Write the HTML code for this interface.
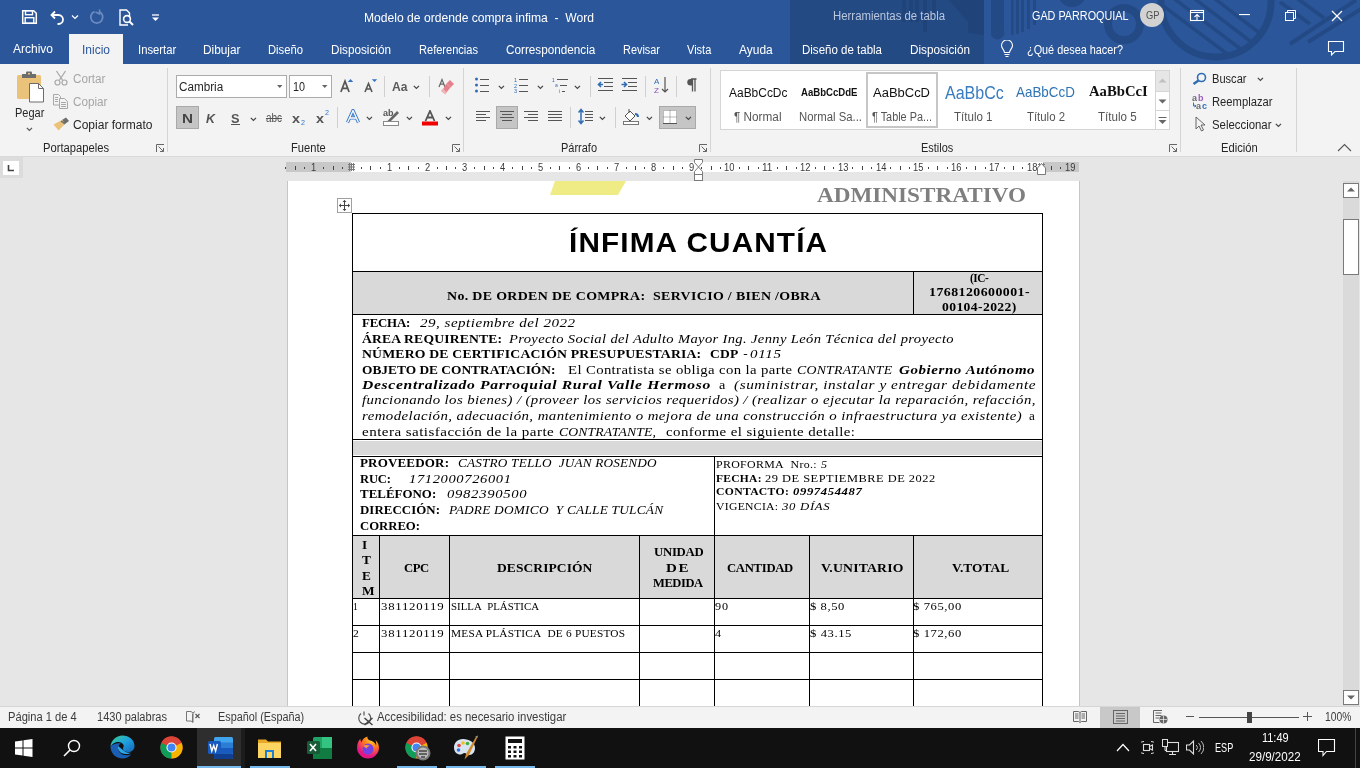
<!DOCTYPE html>
<html><head><meta charset="utf-8">
<style>
*{margin:0;padding:0;box-sizing:border-box}
html,body{width:1360px;height:768px;overflow:hidden;background:#e6e6e6;font-family:"Liberation Sans",sans-serif}
.a{position:absolute;white-space:nowrap}
#title{position:absolute;left:0;top:0;width:1360px;height:64px;background:#2b579a;overflow:hidden}
#ribbon{position:absolute;left:0;top:64px;width:1360px;height:93px;background:#f3f3f3}
#doc{position:absolute;left:0;top:157px;width:1360px;height:549px;background:#e6e6e6;overflow:hidden}
#status{position:absolute;left:0;top:706px;width:1360px;height:22px;background:#f3f3f3}
#task{position:absolute;left:0;top:728px;width:1360px;height:40px;background:#101010}
</style></head><body>
<div id="root" style="position:absolute;left:0;top:0;width:1360px;height:768px;overflow:hidden;will-change:transform">
<div id="title">
<svg class="a" style="left:0;top:0" width="1360" height="64">
<rect x="790" y="0" width="194" height="64" fill="#244a84"/>
<g fill="#20447a">
<rect x="902" y="0" width="4" height="22"/><rect x="909" y="0" width="4" height="22"/><rect x="915" y="0" width="4" height="22"/><rect x="923" y="0" width="4" height="32"/><rect x="932" y="0" width="4" height="20"/>
<path d="M949 0 L968 0 L968 22 Z"/>
<path d="M968 0 L984 0 L984 35 L968 33 Z"/>
</g>
<g fill="#244a86">
<path d="M991 0h13v30a6 6 0 0 1-13 5z"/>
<rect x="1011" y="0" width="2.5" height="35"/><rect x="1016" y="0" width="3" height="34"/><rect x="1021" y="0" width="3" height="32"/><rect x="1027" y="0" width="3" height="29"/><rect x="1033" y="0" width="3" height="25"/>
<circle cx="1072" cy="-7" r="14"/>
</g>
<clipPath id="cp1"><circle cx="1216" cy="2" r="52"/></clipPath>
<g clip-path="url(#cp1)" stroke="#244a86" stroke-width="3.5"><path d="M1150 -4 L1230 56"/><path d="M1160 -12 L1242 50"/><path d="M1170 -20 L1254 44"/><path d="M1180 -28 L1266 38"/></g>
<circle cx="1216" cy="2" r="55" fill="none" stroke="#244a86" stroke-width="7"/>
<circle cx="1124" cy="24" r="16" fill="none" stroke="#244a86" stroke-width="8"/>
<g stroke="#244a86" stroke-width="4"><path d="M1356 0 L1290 44"/><path d="M1366 6 L1308 42"/><path d="M1280 2 L1310 24"/><path d="M1294 -4 L1324 18"/></g>
</svg>
<svg class="a" style="left:21px;top:9px" width="17" height="16" viewBox="0 0 17 16"><path d="M1.7 1.7h11l2.6 2.6v10h-13.6z" fill="none" stroke="#fff" stroke-width="1.5"/><rect x="4.5" y="1.7" width="7" height="4" fill="none" stroke="#fff" stroke-width="1.4"/><rect x="4.2" y="8.7" width="8.6" height="5.6" fill="none" stroke="#fff" stroke-width="1.4"/></svg>
<svg class="a" style="left:50px;top:9px" width="16" height="16" viewBox="0 0 16 16"><path d="M5 2.5 L1.5 6 L5 9.5" fill="none" stroke="#fff" stroke-width="1.8"/><path d="M2 6h6.5a4.5 4.5 0 0 1 0 9h-1" fill="none" stroke="#fff" stroke-width="1.8"/></svg>
<svg class="a" style="left:71px;top:14px" width="8" height="6"><path d="M1 1.5l3 3 3-3" fill="none" stroke="#fff" stroke-width="1.2"/></svg>
<svg class="a" style="left:89px;top:9px" width="16" height="16" viewBox="0 0 16 16"><path d="M10 2.6 A6 6 0 1 1 5.5 2.6" fill="none" stroke="#6d8ac0" stroke-width="1.8"/><path d="M10.5 0.5 L10.5 5 L6.5 3" fill="none" stroke="#6d8ac0" stroke-width="1.5"/></svg>
<svg class="a" style="left:119px;top:9px" width="17" height="17" viewBox="0 0 17 17"><path d="M9 16H1V1h6.5l3 3v4" fill="none" stroke="#fff" stroke-width="1.4"/><circle cx="8" cy="10" r="3.4" fill="none" stroke="#fff" stroke-width="1.6"/><path d="M10.5 12.5 L14 16" stroke="#fff" stroke-width="2"/></svg>
<svg class="a" style="left:151px;top:14px" width="9" height="8"><path d="M1 1h7" stroke="#fff" stroke-width="1.3"/><path d="M1 3.5h7l-3.5 3.5z" fill="#fff"/></svg>
<div class="a" style="left:363.5px;top:11.84px;font-size:12px;line-height:12px;color:#ffffff;font-family:'Liberation Sans',sans-serif;transform:scaleX(1.0093);transform-origin:0 0;">Modelo de ordende compra infima&nbsp; - &nbsp;Word</div><div class="a" style="left:832.5px;top:10.14px;font-size:12px;line-height:12px;color:#bac7dd;font-family:'Liberation Sans',sans-serif;transform:scaleX(0.9487);transform-origin:0 0;">Herramientas de tabla</div><div class="a" style="left:1031.5px;top:10.34px;font-size:12px;line-height:12px;color:#ffffff;font-family:'Liberation Sans',sans-serif;transform:scaleX(0.9007);transform-origin:0 0;">GAD PARROQUIAL</div><div class="a" style="left:1140px;top:3px;width:24px;height:24px;border-radius:12px;background:#d2d2d2"></div><div class="a" style="left:1145.5px;top:10.84px;font-size:10px;line-height:10px;color:#505050;font-family:'Liberation Sans',sans-serif;transform:scaleX(0.9341);transform-origin:0 0;">GP</div><svg class="a" style="left:1189px;top:8px" width="16" height="14" viewBox="0 0 16 14"><rect x="1.5" y="2.5" width="13" height="10" fill="none" stroke="#fff" stroke-width="1.1"/><path d="M1.5 4.5h13" stroke="#fff" stroke-width="1.1"/><path d="M8 12V6.5M5.5 9L8 6.5l2.5 2.5" fill="none" stroke="#fff" stroke-width="1.1"/></svg>
<svg class="a" style="left:1239px;top:14px" width="12" height="2"><rect x="0" y="0" width="11" height="1.1" fill="#fff"/></svg>
<svg class="a" style="left:1285px;top:9px" width="12" height="12" viewBox="0 0 12 12"><rect x="0.5" y="3.5" width="8" height="8" fill="none" stroke="#fff" stroke-width="1"/><path d="M2.5 3.5V1.5h8v8H8.5" fill="none" stroke="#fff" stroke-width="1"/></svg>
<svg class="a" style="left:1331px;top:10px" width="12" height="12" viewBox="0 0 12 12"><path d="M1 1l10 10M11 1L1 11" stroke="#fff" stroke-width="1.2"/></svg>
<div class="a" style="left:69px;top:34px;width:54px;height:30px;background:#f3f3f3"></div>
<div class="a" style="left:13px;top:43.34px;font-size:12px;line-height:12px;color:#ffffff;font-family:'Liberation Sans',sans-serif;transform:scaleX(0.9996);transform-origin:0 0;">Archivo</div><div class="a" style="left:81.6px;top:44.14px;font-size:12px;line-height:12px;color:#2b579a;font-family:'Liberation Sans',sans-serif;transform:scaleX(0.9994);transform-origin:0 0;">Inicio</div><div class="a" style="left:137.5px;top:44.14px;font-size:12px;line-height:12px;color:#ffffff;font-family:'Liberation Sans',sans-serif;transform:scaleX(0.9389);transform-origin:0 0;">Insertar</div><div class="a" style="left:203.2px;top:44.14px;font-size:12px;line-height:12px;color:#ffffff;font-family:'Liberation Sans',sans-serif;transform:scaleX(0.9864);transform-origin:0 0;">Dibujar</div><div class="a" style="left:268.3px;top:44.14px;font-size:12px;line-height:12px;color:#ffffff;font-family:'Liberation Sans',sans-serif;transform:scaleX(0.9368);transform-origin:0 0;">Diseño</div><div class="a" style="left:331px;top:44.14px;font-size:12px;line-height:12px;color:#ffffff;font-family:'Liberation Sans',sans-serif;transform:scaleX(0.9778);transform-origin:0 0;">Disposición</div><div class="a" style="left:419px;top:44.14px;font-size:12px;line-height:12px;color:#ffffff;font-family:'Liberation Sans',sans-serif;transform:scaleX(0.9214);transform-origin:0 0;">Referencias</div><div class="a" style="left:506.2px;top:44.14px;font-size:12px;line-height:12px;color:#ffffff;font-family:'Liberation Sans',sans-serif;transform:scaleX(0.9771);transform-origin:0 0;">Correspondencia</div><div class="a" style="left:623px;top:44.14px;font-size:12px;line-height:12px;color:#ffffff;font-family:'Liberation Sans',sans-serif;transform:scaleX(0.9094);transform-origin:0 0;">Revisar</div><div class="a" style="left:687px;top:44.14px;font-size:12px;line-height:12px;color:#ffffff;font-family:'Liberation Sans',sans-serif;transform:scaleX(0.9181);transform-origin:0 0;">Vista</div><div class="a" style="left:738.7px;top:44.14px;font-size:12px;line-height:12px;color:#ffffff;font-family:'Liberation Sans',sans-serif;transform:scaleX(0.9967);transform-origin:0 0;">Ayuda</div><div class="a" style="left:802px;top:44.14px;font-size:12px;line-height:12px;color:#ffffff;font-family:'Liberation Sans',sans-serif;transform:scaleX(0.9593);transform-origin:0 0;">Diseño de tabla</div><div class="a" style="left:910px;top:44.14px;font-size:12px;line-height:12px;color:#ffffff;font-family:'Liberation Sans',sans-serif;transform:scaleX(0.9778);transform-origin:0 0;">Disposición</div><div class="a" style="left:1027px;top:44.14px;font-size:12px;line-height:12px;color:#ffffff;font-family:'Liberation Sans',sans-serif;transform:scaleX(0.9050);transform-origin:0 0;">¿Qué desea hacer?</div><svg class="a" style="left:1000px;top:40px" width="14" height="18" viewBox="0 0 14 18"><path d="M4.5 12.5C4.5 10 1.5 8.5 1.5 5.5A5.5 5.5 0 0 1 12.5 5.5C12.5 8.5 9.5 10 9.5 12.5Z" fill="none" stroke="#fff" stroke-width="1.1"/><path d="M4.5 14.5h5M5.5 16.5h3" stroke="#fff" stroke-width="1.1"/></svg>
<svg class="a" style="left:1327px;top:40px" width="18" height="17" viewBox="0 0 18 17"><path d="M1.5 1.5h15v10H8l-3.5 3.5V11.5H1.5z" fill="none" stroke="#fff" stroke-width="1.1"/></svg>
</div><div id="ribbon"></div><div class="a" style="left:0;top:156px;width:1360px;height:1px;background:#dadada"></div><svg class="a" style="left:16px;top:71px" width="30" height="32" viewBox="0 0 30 32">
<rect x="1" y="4" width="24" height="24" rx="1.5" fill="#ebc27a"/>
<rect x="6" y="3" width="14" height="4" fill="#6d6d6d"/><rect x="10" y="0.5" width="6" height="4" rx="1" fill="#6d6d6d"/><rect x="12" y="2" width="2" height="1.5" fill="#ebc27a"/>
<path d="M13.5 12.5h9l5 5v13.5h-14z" fill="#fff" stroke="#6d6d6d" stroke-width="1"/><path d="M22.5 12.5v5h5" fill="none" stroke="#6d6d6d" stroke-width="1"/>
</svg><div class="a" style="left:14.6px;top:107.04px;font-size:12px;line-height:12px;color:#262626;font-family:'Liberation Sans',sans-serif;transform:scaleX(0.9179);transform-origin:0 0;">Pegar</div><svg class="a" style="left:26px;top:127px" width="7" height="5"><path d="M0.8 0.8l2.6 2.6 2.6-2.6" fill="none" stroke="#555" stroke-width="1.2"/></svg><svg class="a" style="left:53px;top:70px" width="16" height="16" viewBox="0 0 16 16"><path d="M3.5 1L9.5 10M12.5 1L6.5 10" stroke="#a8a8a8" stroke-width="1.3" fill="none"/><circle cx="4.5" cy="12.5" r="2.5" fill="none" stroke="#a8a8a8" stroke-width="1.2"/><circle cx="11.5" cy="12.5" r="2.5" fill="none" stroke="#a8a8a8" stroke-width="1.2"/></svg><div class="a" style="left:72.5px;top:73.04px;font-size:12px;line-height:12px;color:#a6a6a6;font-family:'Liberation Sans',sans-serif;transform:scaleX(0.9747);transform-origin:0 0;">Cortar</div><svg class="a" style="left:53px;top:94px" width="16" height="15" viewBox="0 0 16 15"><path d="M0.5 0.5h5l2 2v8.5h-7z" fill="#f3f3f3" stroke="#a8a8a8" stroke-width="1"/><path d="M6.5 4.5h5l3 3v7h-8z" fill="#f3f3f3" stroke="#a8a8a8" stroke-width="1"/><path d="M2 3.5h3M2 5.5h3M2 7.5h3M8 8.5h5M8 10.5h5M8 12.5h5" stroke="#a8a8a8" stroke-width="1"/></svg><div class="a" style="left:72.5px;top:96.04px;font-size:12px;line-height:12px;color:#a6a6a6;font-family:'Liberation Sans',sans-serif;transform:scaleX(0.9757);transform-origin:0 0;">Copiar</div><svg class="a" style="left:53px;top:117px" width="17" height="14" viewBox="0 0 17 14"><path d="M9 3 L13 0.5 L16 4 L12 7 Z" fill="#6d6d6d"/><path d="M0.5 7.5 L9 3 L12 7 L5.5 13.5 Z" fill="#ebc27a"/><path d="M8 4 L12 7" stroke="#6d6d6d" stroke-width="1.5"/></svg><div class="a" style="left:72.5px;top:119.04px;font-size:12px;line-height:12px;color:#262626;font-family:'Liberation Sans',sans-serif;transform:scaleX(1.0016);transform-origin:0 0;">Copiar formato</div><div class="a" style="left:42.6px;top:142.04px;font-size:12px;line-height:12px;color:#262626;font-family:'Liberation Sans',sans-serif;transform:scaleX(0.9333);transform-origin:0 0;">Portapapeles</div><svg class="a" style="left:156px;top:144px" width="9" height="9"><path d="M0.5 8V0.5H8" fill="none" stroke="#666" stroke-width="1"/><path d="M2.5 2.5L7.5 7.5M4 7.5h3.5V4" fill="none" stroke="#666" stroke-width="1"/></svg><div class="a" style="left:167px;top:68px;width:1px;height:84px;background:#d4d4d4"></div><div class="a" style="left:176px;top:75px;width:111px;height:23px;background:#fff;border:1px solid #ababab"></div><div class="a" style="left:179.3px;top:81.04px;font-size:12px;line-height:12px;color:#262626;font-family:'Liberation Sans',sans-serif;transform:scaleX(0.9744);transform-origin:0 0;">Cambria</div><svg class="a" style="left:277px;top:85px" width="6" height="4"><path d="M0 0h5.5L2.75 3z" fill="#666"/></svg><div class="a" style="left:289px;top:75px;width:43px;height:23px;background:#fff;border:1px solid #ababab"></div><div class="a" style="left:292.5px;top:81.04px;font-size:12px;line-height:12px;color:#262626;font-family:'Liberation Sans',sans-serif;transform:scaleX(0.8982);transform-origin:0 0;">10</div><svg class="a" style="left:322px;top:85px" width="6" height="4"><path d="M0 0h5.5L2.75 3z" fill="#666"/></svg><svg class="a" style="left:340px;top:78px" width="15" height="15" viewBox="0 0 15 15"><path d="M0.9 14L5 3.2 9.1 14M2.4 10.3h5.2" fill="none" stroke="#555" stroke-width="1.7"/><path d="M7.8 4L10.5 1 13.2 4z" fill="#2f72c0"/></svg>
<svg class="a" style="left:364px;top:78px" width="14" height="15" viewBox="0 0 14 15"><path d="M1 14L4.5 5.5 8 14M2.3 11h4.4" fill="none" stroke="#555" stroke-width="1.6"/><path d="M7.8 1.2h5.4L10.5 4z" fill="#2f72c0"/></svg><div class="a" style="left:384px;top:76px;width:1px;height:21px;background:#d0d0d0"></div><div class="a" style="left:391.8px;top:79.80px;font-size:13px;line-height:13px;color:#5a5a5a;font-family:'Liberation Sans',sans-serif;transform:scaleX(0.9323);transform-origin:0 0;"><b>Aa</b></div><svg class="a" style="left:413px;top:85px" width="7" height="5"><path d="M0.8 0.8l2.6 2.6 2.6-2.6" fill="none" stroke="#444" stroke-width="1.2"/></svg><div class="a" style="left:429px;top:76px;width:1px;height:21px;background:#d0d0d0"></div><svg class="a" style="left:438px;top:78px" width="17" height="17" viewBox="0 0 17 17"><path d="M1 9L4 1.5 7 9M2.1 6.2h3.8" fill="none" stroke="#666" stroke-width="1.2"/><path d="M8.5 5.5L12 2l4 4-3.5 3.5z" fill="#e5808c"/><path d="M3.5 13.5L8.5 5.5l4 4-5 6z" fill="#e5808c"/><path d="M3 12.5l2-2 4 4-2 2z" fill="#f0b3ba"/></svg><div class="a" style="left:176px;top:106px;width:23px;height:23px;background:#c5c5c5;border:1px solid #a9a9a9"></div><div class="a" style="left:182px;top:111.50px;font-size:13px;line-height:13px;color:#444;font-family:'Liberation Sans',sans-serif;transform:scaleX(1.1714);transform-origin:0 0;"><b>N</b></div><div class="a" style="left:206px;top:111.50px;font-size:13px;line-height:13px;color:#555;font-family:'Liberation Sans',sans-serif;transform:scaleX(0.9584);transform-origin:0 0;"><b><i>K</i></b></div><div class="a" style="left:231px;top:111.50px;font-size:13px;line-height:13px;color:#555;font-family:'Liberation Sans',sans-serif;transform:scaleX(0.9802);transform-origin:0 0;"><b>S</b></div><div class="a" style="left:231px;top:124px;width:9px;height:1px;background:#555"></div><svg class="a" style="left:250px;top:117px" width="7" height="5"><path d="M0.8 0.8l2.6 2.6 2.6-2.6" fill="none" stroke="#444" stroke-width="1.2"/></svg><div class="a" style="left:266px;top:111.84px;font-size:12px;line-height:12px;color:#555;font-family:'Liberation Sans',sans-serif;transform:scaleX(0.8265);transform-origin:0 0;text-decoration:line-through;">abc</div><div class="a" style="left:292px;top:111.50px;font-size:13px;line-height:13px;color:#555;font-family:'Liberation Sans',sans-serif;transform:scaleX(1.1058);transform-origin:0 0;"><b>x</b></div><div class="a" style="left:300.5px;top:119.07px;font-size:7px;line-height:7px;color:#2b79d0;font-family:'Liberation Sans',sans-serif;transform:scaleX(1.0240);transform-origin:0 0;">2</div><div class="a" style="left:316px;top:111.50px;font-size:13px;line-height:13px;color:#555;font-family:'Liberation Sans',sans-serif;transform:scaleX(1.1058);transform-origin:0 0;"><b>x</b></div><div class="a" style="left:324.5px;top:108.57px;font-size:7px;line-height:7px;color:#2b79d0;font-family:'Liberation Sans',sans-serif;transform:scaleX(1.0240);transform-origin:0 0;">2</div><div class="a" style="left:337px;top:107px;width:1px;height:21px;background:#d0d0d0"></div><svg class="a" style="left:346px;top:109px" width="14" height="15" viewBox="0 0 14 15"><path d="M1.5 13.5L7 1.5 12.5 13.5M3.8 9h6.4" fill="none" stroke="#3c7dc9" stroke-width="3.2" stroke-linejoin="round"/><path d="M1.5 13.5L7 1.5 12.5 13.5M3.8 9h6.4" fill="none" stroke="#fff" stroke-width="1.3" stroke-linejoin="round"/><path d="M6 7.5h2L7 5.2z" fill="#3c7dc9"/></svg><svg class="a" style="left:366px;top:116px" width="7" height="5"><path d="M0.8 0.8l2.6 2.6 2.6-2.6" fill="none" stroke="#444" stroke-width="1.2"/></svg><svg class="a" style="left:383px;top:108px" width="17" height="18" viewBox="0 0 17 18"><text x="0" y="8" font-size="9" font-weight="bold" style="font-family:'Liberation Sans'" fill="#555">ab</text><path d="M4 13.5 L14 3 L16 5 L6.5 14.5 L3.5 15z" fill="#666"/><rect x="0.5" y="13.5" width="15" height="4" fill="#fff" stroke="#8a8a8a" stroke-width="1"/></svg><svg class="a" style="left:406px;top:116px" width="7" height="5"><path d="M0.8 0.8l2.6 2.6 2.6-2.6" fill="none" stroke="#444" stroke-width="1.2"/></svg><svg class="a" style="left:421px;top:110px" width="18" height="16" viewBox="0 0 18 16"><path d="M4.5 11L9 1 13.5 11M6.2 7.5h5.6" fill="none" stroke="#555" stroke-width="1.8"/><rect x="1" y="11.5" width="16" height="4" fill="#f00000"/></svg><svg class="a" style="left:445px;top:116px" width="7" height="5"><path d="M0.8 0.8l2.6 2.6 2.6-2.6" fill="none" stroke="#444" stroke-width="1.2"/></svg><div class="a" style="left:290.7px;top:142.04px;font-size:12px;line-height:12px;color:#262626;font-family:'Liberation Sans',sans-serif;transform:scaleX(0.9288);transform-origin:0 0;">Fuente</div><svg class="a" style="left:452px;top:144px" width="9" height="9"><path d="M0.5 8V0.5H8" fill="none" stroke="#666" stroke-width="1"/><path d="M2.5 2.5L7.5 7.5M4 7.5h3.5V4" fill="none" stroke="#666" stroke-width="1"/></svg><div class="a" style="left:463px;top:68px;width:1px;height:84px;background:#d4d4d4"></div><svg class="a" style="left:475px;top:77px" width="15" height="16" viewBox="0 0 15 16"><circle cx="1.5" cy="2" r="1.5" fill="#2f6db5"/><circle cx="1.5" cy="8" r="1.5" fill="#2f6db5"/><circle cx="1.5" cy="14" r="1.5" fill="#2f6db5"/><path d="M5 2.5h9M5 8.5h9M5 14.5h9" stroke="#555" stroke-width="1"/></svg><svg class="a" style="left:498px;top:85px" width="7" height="5"><path d="M0.8 0.8l2.6 2.6 2.6-2.6" fill="none" stroke="#444" stroke-width="1.2"/></svg><svg class="a" style="left:514px;top:77px" width="15" height="16" viewBox="0 0 15 16"><text x="0" y="4.5" font-size="5.5" style="font-family:'Liberation Sans'" fill="#2f6db5">1</text><text x="0" y="10.5" font-size="5.5" style="font-family:'Liberation Sans'" fill="#2f6db5">2</text><text x="0" y="16" font-size="5.5" style="font-family:'Liberation Sans'" fill="#2f6db5">3</text><path d="M5 2.5h9M5 8.5h9M5 14.5h9" stroke="#555" stroke-width="1"/></svg><svg class="a" style="left:537px;top:85px" width="7" height="5"><path d="M0.8 0.8l2.6 2.6 2.6-2.6" fill="none" stroke="#444" stroke-width="1.2"/></svg><svg class="a" style="left:552px;top:77px" width="17" height="16" viewBox="0 0 17 16"><text x="0" y="4.5" font-size="5" style="font-family:'Liberation Sans'" fill="#2f6db5">1</text><text x="3" y="10" font-size="5" style="font-family:'Liberation Sans'" fill="#2f6db5">a</text><text x="7" y="15.5" font-size="5" style="font-family:'Liberation Sans'" fill="#2f6db5">i</text><path d="M5 2.5h11M8 8.5h7M10 14.5h3" stroke="#555" stroke-width="1"/></svg><svg class="a" style="left:574px;top:85px" width="7" height="5"><path d="M0.8 0.8l2.6 2.6 2.6-2.6" fill="none" stroke="#444" stroke-width="1.2"/></svg><div class="a" style="left:590px;top:76px;width:1px;height:21px;background:#d0d0d0"></div><svg class="a" style="left:597px;top:77px" width="17" height="16" viewBox="0 0 17 16"><path d="M1 1.5h15M7 5.5h9M7 9.5h9M1 13.5h15" stroke="#555" stroke-width="1"/><path d="M6 7.5H1.5M4 5L1.5 7.5 4 10" fill="none" stroke="#2f6db5" stroke-width="1.6"/></svg>
<svg class="a" style="left:621px;top:77px" width="17" height="16" viewBox="0 0 17 16"><path d="M1 1.5h15M7 5.5h9M7 9.5h9M1 13.5h15" stroke="#555" stroke-width="1"/><path d="M0.5 7.5H5M3 5L5.5 7.5 3 10" fill="none" stroke="#2f6db5" stroke-width="1.6"/></svg><div class="a" style="left:645px;top:76px;width:1px;height:21px;background:#d0d0d0"></div><svg class="a" style="left:654px;top:76px" width="15" height="18" viewBox="0 0 15 18"><text x="0" y="7.5" font-size="8" style="font-family:'Liberation Sans'" fill="#2f6db5">A</text><text x="0" y="16.5" font-size="8" style="font-family:'Liberation Sans'" fill="#8a4fb5">Z</text><path d="M11 1v15M8 13l3 3 3-3" fill="none" stroke="#555" stroke-width="1.2"/></svg>
<svg class="a" style="left:686px;top:78px" width="11" height="14" viewBox="0 0 11 14"><path d="M5 1h5.5M6.5 1v12.5M9 1v12.5" stroke="#555" stroke-width="1.3"/><path d="M6.5 1H4.5a3.2 3.2 0 0 0 0 6.4h2z" fill="#555"/></svg><div class="a" style="left:676px;top:76px;width:1px;height:21px;background:#d0d0d0"></div><svg class="a" style="left:476px;top:111px" width="15" height="11"><path d="M0 0.5h14M0 3.5h10M0 6.5h14M0 9.5h10" stroke="#555" stroke-width="1"/></svg><div class="a" style="left:496px;top:106px;width:22px;height:23px;background:#c5c5c5;border:1px solid #a9a9a9"></div><svg class="a" style="left:500px;top:111px" width="15" height="11"><path d="M0 0.5h14M2 3.5h10M0 6.5h14M2 9.5h10" stroke="#555" stroke-width="1"/></svg>
<svg class="a" style="left:524px;top:111px" width="15" height="11"><path d="M0 0.5h14M4 3.5h10M0 6.5h14M4 9.5h10" stroke="#555" stroke-width="1"/></svg>
<svg class="a" style="left:548px;top:111px" width="15" height="11"><path d="M0 0.5h14M0 3.5h14M0 6.5h14M0 9.5h14" stroke="#555" stroke-width="1"/></svg><div class="a" style="left:570px;top:107px;width:1px;height:21px;background:#d0d0d0"></div><svg class="a" style="left:578px;top:108px" width="16" height="17" viewBox="0 0 16 17"><path d="M3 2v13M0.5 4.5L3 1.5l2.5 3M0.5 12.5L3 15.5l2.5-3" fill="none" stroke="#2f6db5" stroke-width="1.5"/><path d="M7 3.5h8M7 6.5h8M7 9.5h8M7 12.5h8" stroke="#555" stroke-width="1"/></svg><svg class="a" style="left:599px;top:116px" width="7" height="5"><path d="M0.8 0.8l2.6 2.6 2.6-2.6" fill="none" stroke="#444" stroke-width="1.2"/></svg><div class="a" style="left:615px;top:107px;width:1px;height:21px;background:#d0d0d0"></div><svg class="a" style="left:623px;top:108px" width="17" height="17" viewBox="0 0 17 17"><path d="M2 8 L7 3 L12 8 L7 13 Z" fill="#fff" stroke="#555" stroke-width="1"/><path d="M6 1v4" stroke="#555" stroke-width="1"/><path d="M12 6a3 3 0 0 1 3 3" fill="none" stroke="#2f6db5" stroke-width="2"/><rect x="0.5" y="13.5" width="15" height="3" fill="#fff" stroke="#777" stroke-width="1"/></svg><svg class="a" style="left:646px;top:116px" width="7" height="5"><path d="M0.8 0.8l2.6 2.6 2.6-2.6" fill="none" stroke="#444" stroke-width="1.2"/></svg><div class="a" style="left:659px;top:106px;width:37px;height:23px;background:#c5c5c5;border:1px solid #a9a9a9"></div><svg class="a" style="left:663px;top:110px" width="14" height="14" viewBox="0 0 14 14"><rect x="0" y="0" width="14" height="14" fill="#fff"/><path d="M0.5 0.5h13v13h-13zM7 0.5v13M0.5 7h13" fill="none" stroke="#777" stroke-width="1" stroke-dasharray="1 1"/><path d="M0 13.5h14" stroke="#555" stroke-width="1"/></svg><svg class="a" style="left:685px;top:116px" width="7" height="5"><path d="M0.8 0.8l2.6 2.6 2.6-2.6" fill="none" stroke="#444" stroke-width="1.2"/></svg><div class="a" style="left:561.3px;top:142.04px;font-size:12px;line-height:12px;color:#262626;font-family:'Liberation Sans',sans-serif;transform:scaleX(0.9146);transform-origin:0 0;">Párrafo</div><svg class="a" style="left:699px;top:144px" width="9" height="9"><path d="M0.5 8V0.5H8" fill="none" stroke="#666" stroke-width="1"/><path d="M2.5 2.5L7.5 7.5M4 7.5h3.5V4" fill="none" stroke="#666" stroke-width="1"/></svg><div class="a" style="left:710px;top:68px;width:1px;height:84px;background:#d4d4d4"></div><div class="a" style="left:720px;top:70px;width:450px;height:60px;background:#fff;border:1px solid #d5d5d5"></div><div class="a" style="left:866px;top:72px;width:72px;height:56px;border:2px solid #c6c6c6;box-shadow:inset 0 0 0 1px #fff"></div><div class="a" style="left:728.5px;top:86.62px;font-size:12.5px;line-height:12.5px;color:#111;font-family:'Liberation Sans',sans-serif;transform:scaleX(0.9568);transform-origin:0 0;">AaBbCcDc</div><div class="a" style="left:734px;top:111.04px;font-size:12px;line-height:12px;color:#555;font-family:'Liberation Sans',sans-serif;transform:scaleX(0.9803);transform-origin:0 0;">¶ Normal</div><div class="a" style="left:800.5px;top:86.89px;font-size:11px;line-height:11px;color:#111;font-family:'Liberation Sans',sans-serif;transform:scaleX(0.8720);transform-origin:0 0;"><b>AaBbCcDdE</b></div><div class="a" style="left:798.5px;top:111.04px;font-size:12px;line-height:12px;color:#555;font-family:'Liberation Sans',sans-serif;transform:scaleX(0.9447);transform-origin:0 0;">Normal Sa...</div><div class="a" style="left:872.7px;top:86.62px;font-size:12.5px;line-height:12.5px;color:#111;font-family:'Liberation Sans',sans-serif;transform:scaleX(1.0384);transform-origin:0 0;">AaBbCcD</div><div class="a" style="left:871.5px;top:111.04px;font-size:12px;line-height:12px;color:#555;font-family:'Liberation Sans',sans-serif;transform:scaleX(0.9054);transform-origin:0 0;">¶ Table Pa...</div><div class="a" style="left:944.7px;top:83.56px;font-size:18px;line-height:18px;color:#3a7cc0;font-family:'Liberation Sans',sans-serif;transform:scaleX(0.8903);transform-origin:0 0;">AaBbCc</div><div class="a" style="left:954px;top:111.04px;font-size:12px;line-height:12px;color:#555;font-family:'Liberation Sans',sans-serif;transform:scaleX(0.9617);transform-origin:0 0;">Título 1</div><div class="a" style="left:1016.4px;top:84.30px;font-size:15px;line-height:15px;color:#2e74b5;font-family:'Liberation Sans',sans-serif;transform:scaleX(0.8928);transform-origin:0 0;">AaBbCcD</div><div class="a" style="left:1026.5px;top:111.04px;font-size:12px;line-height:12px;color:#555;font-family:'Liberation Sans',sans-serif;transform:scaleX(0.9493);transform-origin:0 0;">Título 2</div><div class="a" style="left:1089px;top:84.44px;font-size:15px;line-height:15px;color:#111;font-family:'Liberation Serif',serif;transform:scaleX(0.9797);transform-origin:0 0;"><b>AaBbCcI</b></div><div class="a" style="left:1098.2px;top:111.04px;font-size:12px;line-height:12px;color:#555;font-family:'Liberation Sans',sans-serif;transform:scaleX(0.9642);transform-origin:0 0;">Título 5</div><div class="a" style="left:1155px;top:70px;width:15px;height:60px;background:#fff;border:1px solid #d5d5d5"></div><div class="a" style="left:1156px;top:71px;width:13px;height:20px;background:#e6e6e6"></div><div class="a" style="left:1155px;top:91px;width:15px;height:1px;background:#d5d5d5"></div><div class="a" style="left:1155px;top:110px;width:15px;height:1px;background:#d5d5d5"></div><svg class="a" style="left:1158px;top:78px" width="9" height="5"><path d="M0.5 4.5L4.5 0.5 8.5 4.5z" fill="#c0c0c0"/></svg>
<svg class="a" style="left:1158px;top:99px" width="9" height="5"><path d="M0.5 0.5L4.5 4.5 8.5 0.5z" fill="#666"/></svg>
<svg class="a" style="left:1158px;top:117px" width="9" height="8"><path d="M0.5 0.5h8" stroke="#666" stroke-width="1"/><path d="M0.5 3L4.5 7 8.5 3z" fill="#666"/></svg><div class="a" style="left:921.4px;top:142.04px;font-size:12px;line-height:12px;color:#262626;font-family:'Liberation Sans',sans-serif;transform:scaleX(0.9111);transform-origin:0 0;">Estilos</div><svg class="a" style="left:1169px;top:144px" width="9" height="9"><path d="M0.5 8V0.5H8" fill="none" stroke="#666" stroke-width="1"/><path d="M2.5 2.5L7.5 7.5M4 7.5h3.5V4" fill="none" stroke="#666" stroke-width="1"/></svg><div class="a" style="left:1180px;top:68px;width:1px;height:84px;background:#d4d4d4"></div><svg class="a" style="left:1192px;top:72px" width="15" height="13" viewBox="0 0 15 13"><circle cx="9.5" cy="5.5" r="4" fill="none" stroke="#2f6db5" stroke-width="1.6"/><path d="M6.5 8.5L1.5 12" stroke="#2f6db5" stroke-width="2.4"/></svg><div class="a" style="left:1211.6px;top:73.04px;font-size:12px;line-height:12px;color:#262626;font-family:'Liberation Sans',sans-serif;transform:scaleX(0.9235);transform-origin:0 0;">Buscar</div><svg class="a" style="left:1257px;top:77px" width="7" height="5"><path d="M0.8 0.8l2.6 2.6 2.6-2.6" fill="none" stroke="#444" stroke-width="1.2"/></svg><svg class="a" style="left:1192px;top:94px" width="17" height="15" viewBox="0 0 17 15"><text x="0" y="6.5" font-size="9" font-weight="bold" style="font-family:'Liberation Sans'" fill="#6a6a6a">a</text><text x="6" y="6.5" font-size="9" font-weight="bold" style="font-family:'Liberation Sans'" fill="#9a5cc0">b</text><text x="4" y="14.5" font-size="9" font-weight="bold" style="font-family:'Liberation Sans'" fill="#6a6a6a">a</text><text x="10" y="14.5" font-size="9" font-weight="bold" style="font-family:'Liberation Sans'" fill="#2f72c0">c</text><path d="M1.5 8.5v3.5h2.5M2.5 11l1.5 1-1.5 1" fill="none" stroke="#2f72c0" stroke-width="1"/></svg><div class="a" style="left:1211.6px;top:96.04px;font-size:12px;line-height:12px;color:#262626;font-family:'Liberation Sans',sans-serif;transform:scaleX(0.9350);transform-origin:0 0;">Reemplazar</div><svg class="a" style="left:1195px;top:116px" width="11" height="16" viewBox="0 0 11 16"><path d="M1 1v12l3-3 2.5 5 2-1-2.5-5h4z" fill="#f3f3f3" stroke="#666" stroke-width="1"/></svg><div class="a" style="left:1211.6px;top:119.04px;font-size:12px;line-height:12px;color:#262626;font-family:'Liberation Sans',sans-serif;transform:scaleX(0.9489);transform-origin:0 0;">Seleccionar</div><svg class="a" style="left:1275px;top:123px" width="7" height="5"><path d="M0.8 0.8l2.6 2.6 2.6-2.6" fill="none" stroke="#444" stroke-width="1.2"/></svg><div class="a" style="left:1220.6px;top:142.04px;font-size:12px;line-height:12px;color:#262626;font-family:'Liberation Sans',sans-serif;transform:scaleX(0.9324);transform-origin:0 0;">Edición</div><div class="a" style="left:1296px;top:68px;width:1px;height:84px;background:#d4d4d4"></div><svg class="a" style="left:1337px;top:143px" width="15" height="9"><path d="M1 8L7.5 1.5 14 8" fill="none" stroke="#555" stroke-width="1.1"/></svg><div class="a" style="left:0;top:157px;width:23px;height:21px;background:#dcdcdc"></div><div class="a" style="left:3px;top:161px;width:16px;height:14px;background:#fff"></div><svg class="a" style="left:7px;top:164px" width="8" height="8"><path d="M1.5 1v5.5H7" fill="none" stroke="#444" stroke-width="1.6"/></svg><div class="a" style="left:286px;top:162px;width:793px;height:10px;background:#fff"></div><div class="a" style="left:286px;top:162px;width:65px;height:10px;background:#c8c8c8"></div><div class="a" style="left:1043px;top:162px;width:36px;height:10px;background:#c8c8c8"></div><svg class="a" style="left:0;top:157px" width="1360" height="30"><rect x="285" y="10" width="1" height="2" fill="#444"/><rect x="295" y="9" width="1" height="4" fill="#444"/><rect x="304" y="10" width="1" height="2" fill="#444"/><rect x="323" y="10" width="1" height="2" fill="#444"/><rect x="333" y="9" width="1" height="4" fill="#444"/><rect x="342" y="10" width="1" height="2" fill="#444"/><rect x="361" y="10" width="1" height="2" fill="#444"/><rect x="370" y="9" width="1" height="4" fill="#444"/><rect x="380" y="10" width="1" height="2" fill="#444"/><rect x="399" y="10" width="1" height="2" fill="#444"/><rect x="408" y="9" width="1" height="4" fill="#444"/><rect x="418" y="10" width="1" height="2" fill="#444"/><rect x="437" y="10" width="1" height="2" fill="#444"/><rect x="446" y="9" width="1" height="4" fill="#444"/><rect x="455" y="10" width="1" height="2" fill="#444"/><rect x="474" y="10" width="1" height="2" fill="#444"/><rect x="484" y="9" width="1" height="4" fill="#444"/><rect x="493" y="10" width="1" height="2" fill="#444"/><rect x="512" y="10" width="1" height="2" fill="#444"/><rect x="522" y="9" width="1" height="4" fill="#444"/><rect x="531" y="10" width="1" height="2" fill="#444"/><rect x="550" y="10" width="1" height="2" fill="#444"/><rect x="559" y="9" width="1" height="4" fill="#444"/><rect x="569" y="10" width="1" height="2" fill="#444"/><rect x="588" y="10" width="1" height="2" fill="#444"/><rect x="597" y="9" width="1" height="4" fill="#444"/><rect x="607" y="10" width="1" height="2" fill="#444"/><rect x="626" y="10" width="1" height="2" fill="#444"/><rect x="635" y="9" width="1" height="4" fill="#444"/><rect x="644" y="10" width="1" height="2" fill="#444"/><rect x="663" y="10" width="1" height="2" fill="#444"/><rect x="673" y="9" width="1" height="4" fill="#444"/><rect x="682" y="10" width="1" height="2" fill="#444"/><rect x="701" y="10" width="1" height="2" fill="#444"/><rect x="711" y="9" width="1" height="4" fill="#444"/><rect x="720" y="10" width="1" height="2" fill="#444"/><rect x="739" y="10" width="1" height="2" fill="#444"/><rect x="748" y="9" width="1" height="4" fill="#444"/><rect x="758" y="10" width="1" height="2" fill="#444"/><rect x="777" y="10" width="1" height="2" fill="#444"/><rect x="786" y="9" width="1" height="4" fill="#444"/><rect x="796" y="10" width="1" height="2" fill="#444"/><rect x="815" y="10" width="1" height="2" fill="#444"/><rect x="824" y="9" width="1" height="4" fill="#444"/><rect x="833" y="10" width="1" height="2" fill="#444"/><rect x="852" y="10" width="1" height="2" fill="#444"/><rect x="862" y="9" width="1" height="4" fill="#444"/><rect x="871" y="10" width="1" height="2" fill="#444"/><rect x="890" y="10" width="1" height="2" fill="#444"/><rect x="900" y="9" width="1" height="4" fill="#444"/><rect x="909" y="10" width="1" height="2" fill="#444"/><rect x="928" y="10" width="1" height="2" fill="#444"/><rect x="937" y="9" width="1" height="4" fill="#444"/><rect x="947" y="10" width="1" height="2" fill="#444"/><rect x="966" y="10" width="1" height="2" fill="#444"/><rect x="975" y="9" width="1" height="4" fill="#444"/><rect x="985" y="10" width="1" height="2" fill="#444"/><rect x="1004" y="10" width="1" height="2" fill="#444"/><rect x="1013" y="9" width="1" height="4" fill="#444"/><rect x="1022" y="10" width="1" height="2" fill="#444"/><rect x="1041" y="10" width="1" height="2" fill="#444"/><rect x="1051" y="9" width="1" height="4" fill="#444"/><rect x="1060" y="10" width="1" height="2" fill="#444"/></svg><div class="a" style="left:311.1px;top:162.53px;font-size:10px;line-height:10px;color:#3a3a3a;font-family:'Liberation Sans',sans-serif;transform:scaleX(0.9348);transform-origin:0 0;">1</div><div class="a" style="left:386.7px;top:162.53px;font-size:10px;line-height:10px;color:#3a3a3a;font-family:'Liberation Sans',sans-serif;transform:scaleX(0.9348);transform-origin:0 0;">1</div><div class="a" style="left:424.5px;top:162.53px;font-size:10px;line-height:10px;color:#3a3a3a;font-family:'Liberation Sans',sans-serif;transform:scaleX(0.9348);transform-origin:0 0;">2</div><div class="a" style="left:462.3px;top:162.53px;font-size:10px;line-height:10px;color:#3a3a3a;font-family:'Liberation Sans',sans-serif;transform:scaleX(0.9348);transform-origin:0 0;">3</div><div class="a" style="left:500.1px;top:162.53px;font-size:10px;line-height:10px;color:#3a3a3a;font-family:'Liberation Sans',sans-serif;transform:scaleX(0.9348);transform-origin:0 0;">4</div><div class="a" style="left:537.9px;top:162.53px;font-size:10px;line-height:10px;color:#3a3a3a;font-family:'Liberation Sans',sans-serif;transform:scaleX(0.9348);transform-origin:0 0;">5</div><div class="a" style="left:575.7px;top:162.53px;font-size:10px;line-height:10px;color:#3a3a3a;font-family:'Liberation Sans',sans-serif;transform:scaleX(0.9348);transform-origin:0 0;">6</div><div class="a" style="left:613.5px;top:162.53px;font-size:10px;line-height:10px;color:#3a3a3a;font-family:'Liberation Sans',sans-serif;transform:scaleX(0.9348);transform-origin:0 0;">7</div><div class="a" style="left:651.3px;top:162.53px;font-size:10px;line-height:10px;color:#3a3a3a;font-family:'Liberation Sans',sans-serif;transform:scaleX(0.9348);transform-origin:0 0;">8</div><div class="a" style="left:689.1px;top:162.53px;font-size:10px;line-height:10px;color:#3a3a3a;font-family:'Liberation Sans',sans-serif;transform:scaleX(0.9348);transform-origin:0 0;">9</div><div class="a" style="left:724.3px;top:162.53px;font-size:10px;line-height:10px;color:#3a3a3a;font-family:'Liberation Sans',sans-serif;transform:scaleX(0.9348);transform-origin:0 0;">10</div><div class="a" style="left:762.1px;top:162.53px;font-size:10px;line-height:10px;color:#3a3a3a;font-family:'Liberation Sans',sans-serif;transform:scaleX(1.0009);transform-origin:0 0;">11</div><div class="a" style="left:799.9px;top:162.53px;font-size:10px;line-height:10px;color:#3a3a3a;font-family:'Liberation Sans',sans-serif;transform:scaleX(0.9348);transform-origin:0 0;">12</div><div class="a" style="left:837.7px;top:162.53px;font-size:10px;line-height:10px;color:#3a3a3a;font-family:'Liberation Sans',sans-serif;transform:scaleX(0.9348);transform-origin:0 0;">13</div><div class="a" style="left:875.5px;top:162.53px;font-size:10px;line-height:10px;color:#3a3a3a;font-family:'Liberation Sans',sans-serif;transform:scaleX(0.9348);transform-origin:0 0;">14</div><div class="a" style="left:913.3px;top:162.53px;font-size:10px;line-height:10px;color:#3a3a3a;font-family:'Liberation Sans',sans-serif;transform:scaleX(0.9348);transform-origin:0 0;">15</div><div class="a" style="left:951.1px;top:162.53px;font-size:10px;line-height:10px;color:#3a3a3a;font-family:'Liberation Sans',sans-serif;transform:scaleX(0.9348);transform-origin:0 0;">16</div><div class="a" style="left:988.9px;top:162.53px;font-size:10px;line-height:10px;color:#3a3a3a;font-family:'Liberation Sans',sans-serif;transform:scaleX(0.9348);transform-origin:0 0;">17</div><div class="a" style="left:1026.7px;top:162.53px;font-size:10px;line-height:10px;color:#3a3a3a;font-family:'Liberation Sans',sans-serif;transform:scaleX(0.9348);transform-origin:0 0;">18</div><div class="a" style="left:1064.5px;top:162.53px;font-size:10px;line-height:10px;color:#3a3a3a;font-family:'Liberation Sans',sans-serif;transform:scaleX(0.9348);transform-origin:0 0;">19</div><svg class="a" style="left:348px;top:163px" width="7" height="8"><path d="M0 1.5h7M0 4h7M0 6.5h7M1.5 0v8M3.5 0v8M5.5 0v8" stroke="#7a7a7a" stroke-width="1"/></svg><svg class="a" style="left:1038px;top:163px" width="7" height="8"><path d="M0 1.5h7M0 4h7M0 6.5h7M1.5 0v8M3.5 0v8M5.5 0v8" stroke="#7a7a7a" stroke-width="1"/></svg><svg class="a" style="left:694px;top:159px" width="9" height="22" viewBox="0 0 9 22"><path d="M0.5 0.5h8v3l-4 4.5-4-4.5z" fill="#fff" stroke="#7a7a7a" stroke-width="1"/><path d="M4.5 8L8.5 12.5v3h-8v-3z" fill="#fff" stroke="#7a7a7a" stroke-width="1"/><rect x="0.5" y="15.5" width="8" height="6" fill="#fff" stroke="#7a7a7a" stroke-width="1"/></svg><svg class="a" style="left:1037px;top:163px" width="9" height="12" viewBox="0 0 9 12"><path d="M4.5 0.5L8.5 5v6.5h-8V5z" fill="#fff" stroke="#7a7a7a" stroke-width="1"/></svg><div class="a" style="left:287px;top:181px;width:793px;height:525px;background:#fff;border-left:1px solid #c6c6c6;border-right:1px solid #c6c6c6"></div><svg class="a" style="left:548px;top:181px" width="80" height="15"><path d="M7 0H78L70 14H2z" fill="#efeb85"/></svg><div class="a" style="left:817.4px;top:183.57px;font-size:22px;line-height:22px;color:#7f7f7f;font-family:'Liberation Serif',serif;transform:scaleX(1.0534);transform-origin:0 0;"><b>ADMINISTRATIVO</b></div><svg class="a" style="left:337px;top:198px" width="15" height="15" viewBox="0 0 15 15"><rect x="0.5" y="0.5" width="14" height="14" fill="#fff" stroke="#a0a0a0"/><path d="M7.5 2.5v10M2.5 7.5h10" stroke="#444" stroke-width="1"/><path d="M7.5 2l-2 2h4zM7.5 13l-2-2h4zM2 7.5l2-2v4zM13 7.5l-2-2v4z" fill="#444"/></svg><div class="a" style="left:353px;top:272px;width:560px;height:42px;background:#d9d9d9"></div><div class="a" style="left:914px;top:272px;width:128px;height:42px;background:#d9d9d9"></div><div class="a" style="left:353px;top:441px;width:689px;height:14px;background:#d9d9d9"></div><div class="a" style="left:353px;top:536px;width:689px;height:62px;background:#d9d9d9"></div><div class="a" style="left:352px;top:213px;width:691px;height:1px;background:#000"></div><div class="a" style="left:352px;top:271px;width:691px;height:1px;background:#000"></div><div class="a" style="left:352px;top:314px;width:691px;height:1px;background:#000"></div><div class="a" style="left:352px;top:439px;width:691px;height:1px;background:#000"></div><div class="a" style="left:352px;top:456px;width:691px;height:1px;background:#000"></div><div class="a" style="left:352px;top:535px;width:691px;height:1px;background:#000"></div><div class="a" style="left:352px;top:598px;width:691px;height:1px;background:#000"></div><div class="a" style="left:352px;top:625px;width:691px;height:1px;background:#000"></div><div class="a" style="left:352px;top:652px;width:691px;height:1px;background:#000"></div><div class="a" style="left:352px;top:679px;width:691px;height:1px;background:#000"></div><div class="a" style="left:352px;top:213px;width:1px;height:494px;background:#000"></div><div class="a" style="left:1042px;top:213px;width:1px;height:494px;background:#000"></div><div class="a" style="left:913px;top:271px;width:1px;height:44px;background:#000"></div><div class="a" style="left:714px;top:456px;width:1px;height:251px;background:#000"></div><div class="a" style="left:379px;top:535px;width:1px;height:172px;background:#000"></div><div class="a" style="left:449px;top:535px;width:1px;height:172px;background:#000"></div><div class="a" style="left:639px;top:535px;width:1px;height:172px;background:#000"></div><div class="a" style="left:809px;top:535px;width:1px;height:172px;background:#000"></div><div class="a" style="left:913px;top:535px;width:1px;height:172px;background:#000"></div><div class="a" style="left:569px;top:229.74px;font-size:27px;line-height:27px;color:#000;font-family:'Liberation Sans',sans-serif;letter-spacing:1.035px;transform:scaleX(1.1005);transform-origin:0 0;"><b>ÍNFIMA CUANTÍA</b></div><div class="a" style="left:447.2px;top:288.91px;font-size:13px;line-height:13px;color:#000;font-family:'Liberation Serif',serif;letter-spacing:0.323px;transform:scaleX(1.0696);transform-origin:0 0;"><b>No. DE ORDEN DE COMPRA:&nbsp; SERVICIO / BIEN /OBRA</b></div><div class="a" style="left:969.7px;top:272.43px;font-size:12.5px;line-height:12.5px;color:#000;font-family:'Liberation Serif',serif;letter-spacing:-0.502px;transform:scaleX(0.9077);transform-origin:0 0;"><b>(IC-</b></div><div class="a" style="left:928.5px;top:286.13px;font-size:12.5px;line-height:12.5px;color:#000;font-family:'Liberation Serif',serif;letter-spacing:0.422px;transform:scaleX(1.1066);transform-origin:0 0;"><b>1768120600001-</b></div><div class="a" style="left:941.9px;top:300.73px;font-size:12.5px;line-height:12.5px;color:#000;font-family:'Liberation Serif',serif;letter-spacing:0.357px;transform:scaleX(1.0903);transform-origin:0 0;"><b>00104-2022)</b></div><div class="a" style="left:362px;top:316.04px;font-size:13.33px;line-height:13.33px;color:#000;font-family:'Liberation Serif',serif;letter-spacing:-0.231px;transform:scaleX(0.9672);transform-origin:0 0;"><b>FECHA:</b></div><div class="a" style="left:420.3px;top:316.04px;font-size:13.33px;line-height:13.33px;color:#000;font-family:'Liberation Serif',serif;letter-spacing:0.441px;transform:scaleX(1.1289);transform-origin:0 0;"><i>29, septiembre del 2022</i></div><div class="a" style="left:362px;top:331.64px;font-size:13.33px;line-height:13.33px;color:#000;font-family:'Liberation Serif',serif;letter-spacing:0.145px;transform:scaleX(1.0249);transform-origin:0 0;"><b>ÁREA REQUIRENTE:</b></div><div class="a" style="left:509.4px;top:331.64px;font-size:13.33px;line-height:13.33px;color:#000;font-family:'Liberation Serif',serif;letter-spacing:0.322px;transform:scaleX(1.0932);transform-origin:0 0;"><i>Proyecto Social del Adulto Mayor Ing. Jenny León Técnica del proyecto</i></div><div class="a" style="left:362px;top:347.24px;font-size:13.33px;line-height:13.33px;color:#000;font-family:'Liberation Serif',serif;letter-spacing:0.170px;transform:scaleX(1.0310);transform-origin:0 0;"><b>NÚMERO DE CERTIFICACIÓN PRESUPUESTARIA:</b></div><div class="a" style="left:709.8px;top:347.24px;font-size:13.33px;line-height:13.33px;color:#000;font-family:'Liberation Serif',serif;letter-spacing:0.156px;transform:scaleX(1.0174);transform-origin:0 0;"><b>CDP</b></div><div class="a" style="left:743.3px;top:347.24px;font-size:13.33px;line-height:13.33px;color:#000;font-family:'Liberation Serif',serif;">-</div><div class="a" style="left:749.7px;top:347.24px;font-size:13.33px;line-height:13.33px;color:#000;font-family:'Liberation Serif',serif;letter-spacing:0.632px;transform:scaleX(1.1245);transform-origin:0 0;"><i>0115</i></div><div class="a" style="left:362px;top:362.84px;font-size:13.33px;line-height:13.33px;color:#000;font-family:'Liberation Serif',serif;letter-spacing:0.015px;transform:scaleX(1.0027);transform-origin:0 0;"><b>OBJETO DE CONTRATACIÓN:</b></div><div class="a" style="left:567.9px;top:362.84px;font-size:13.33px;line-height:13.33px;color:#000;font-family:'Liberation Serif',serif;letter-spacing:0.339px;transform:scaleX(1.1064);transform-origin:0 0;">El Contratista se obliga con la parte</div><div class="a" style="left:796.5px;top:362.84px;font-size:13.33px;line-height:13.33px;color:#000;font-family:'Liberation Serif',serif;letter-spacing:0.215px;transform:scaleX(1.0373);transform-origin:0 0;"><i>CONTRATANTE</i></div><div class="a" style="left:899.4px;top:362.84px;font-size:13.33px;line-height:13.33px;color:#000;font-family:'Liberation Serif',serif;letter-spacing:0.515px;transform:scaleX(1.1235);transform-origin:0 0;"><b><i>Gobierno Autónomo</i></b></div><div class="a" style="left:362px;top:377.94px;font-size:13.33px;line-height:13.33px;color:#000;font-family:'Liberation Serif',serif;letter-spacing:0.586px;transform:scaleX(1.1710);transform-origin:0 0;"><b><i>Descentralizado Parroquial Rural Valle Hermoso</i></b></div><div class="a" style="left:719.3px;top:377.94px;font-size:13.33px;line-height:13.33px;color:#000;font-family:'Liberation Serif',serif;letter-spacing:0.254px;transform:scaleX(1.0687);transform-origin:0 0;">a</div><div class="a" style="left:733.5px;top:377.94px;font-size:13.33px;line-height:13.33px;color:#000;font-family:'Liberation Serif',serif;letter-spacing:0.471px;transform:scaleX(1.1475);transform-origin:0 0;"><i>(suministrar, instalar y entregar debidamente</i></div><div class="a" style="left:361.6px;top:393.34px;font-size:13.33px;line-height:13.33px;color:#000;font-family:'Liberation Serif',serif;letter-spacing:0.355px;transform:scaleX(1.1128);transform-origin:0 0;"><i>funcionando los bienes) / (proveer los servicios requeridos) / (realizar o ejecutar la reparación, refacción,</i></div><div class="a" style="left:362px;top:408.84px;font-size:13.33px;line-height:13.33px;color:#000;font-family:'Liberation Serif',serif;letter-spacing:0.384px;transform:scaleX(1.1150);transform-origin:0 0;"><i>remodelación, adecuación, mantenimiento o mejora de una construcción o infraestructura ya existente)</i></div><div class="a" style="left:1029.4px;top:408.84px;font-size:13.33px;line-height:13.33px;color:#000;font-family:'Liberation Serif',serif;letter-spacing:-0.049px;transform:scaleX(0.9877);transform-origin:0 0;">a</div><div class="a" style="left:362px;top:425.14px;font-size:13.33px;line-height:13.33px;color:#000;font-family:'Liberation Serif',serif;letter-spacing:0.403px;transform:scaleX(1.1300);transform-origin:0 0;">entera satisfacción de la parte</div><div class="a" style="left:559.3px;top:425.14px;font-size:13.33px;line-height:13.33px;color:#000;font-family:'Liberation Serif',serif;letter-spacing:0.143px;transform:scaleX(1.0261);transform-origin:0 0;"><i>CONTRATANTE,</i></div><div class="a" style="left:666px;top:425.14px;font-size:13.33px;line-height:13.33px;color:#000;font-family:'Liberation Serif',serif;letter-spacing:0.382px;transform:scaleX(1.1176);transform-origin:0 0;">conforme el siguiente detalle:</div><div class="a" style="left:360.3px;top:457.18px;font-size:12.8px;line-height:12.8px;color:#000;font-family:'Liberation Serif',serif;letter-spacing:0.129px;transform:scaleX(1.0207);transform-origin:0 0;"><b>PROVEEDOR:</b></div><div class="a" style="left:458.3px;top:457.18px;font-size:12.8px;line-height:12.8px;color:#000;font-family:'Liberation Serif',serif;letter-spacing:0.168px;transform:scaleX(1.0348);transform-origin:0 0;"><i>CASTRO TELLO&nbsp; JUAN ROSENDO</i></div><div class="a" style="left:360.3px;top:473.28px;font-size:12.8px;line-height:12.8px;color:#000;font-family:'Liberation Serif',serif;letter-spacing:-0.136px;transform:scaleX(0.9812);transform-origin:0 0;"><b>RUC:</b></div><div class="a" style="left:408.5px;top:473.28px;font-size:12.8px;line-height:12.8px;color:#000;font-family:'Liberation Serif',serif;letter-spacing:0.552px;transform:scaleX(1.1357);transform-origin:0 0;"><i>1712000726001</i></div><div class="a" style="left:360.3px;top:488.28px;font-size:12.8px;line-height:12.8px;color:#000;font-family:'Liberation Serif',serif;letter-spacing:0.041px;transform:scaleX(1.0066);transform-origin:0 0;"><b>TELÉFONO:</b></div><div class="a" style="left:446.6px;top:488.28px;font-size:12.8px;line-height:12.8px;color:#000;font-family:'Liberation Serif',serif;letter-spacing:0.609px;transform:scaleX(1.1474);transform-origin:0 0;"><i>0982390500</i></div><div class="a" style="left:360.3px;top:504.28px;font-size:12.8px;line-height:12.8px;color:#000;font-family:'Liberation Serif',serif;letter-spacing:0.048px;transform:scaleX(1.0082);transform-origin:0 0;"><b>DIRECCIÓN:</b></div><div class="a" style="left:449.3px;top:504.28px;font-size:12.8px;line-height:12.8px;color:#000;font-family:'Liberation Serif',serif;letter-spacing:0.201px;transform:scaleX(1.0426);transform-origin:0 0;"><i>PADRE DOMICO&nbsp; Y CALLE TULCÁN</i></div><div class="a" style="left:360.3px;top:520.18px;font-size:12.8px;line-height:12.8px;color:#000;font-family:'Liberation Serif',serif;letter-spacing:-0.029px;transform:scaleX(0.9957);transform-origin:0 0;"><b>CORREO:</b></div><div class="a" style="left:715.9px;top:458.59px;font-size:11px;line-height:11px;color:#000;font-family:'Liberation Serif',serif;letter-spacing:0.309px;transform:scaleX(1.0787);transform-origin:0 0;">PROFORMA&nbsp; Nro.:</div><div class="a" style="left:821.2px;top:458.59px;font-size:11px;line-height:11px;color:#000;font-family:'Liberation Serif',serif;letter-spacing:0.328px;transform:scaleX(1.0982);transform-origin:0 0;"><i>5</i></div><div class="a" style="left:715.9px;top:472.69px;font-size:11px;line-height:11px;color:#000;font-family:'Liberation Serif',serif;letter-spacing:0.254px;transform:scaleX(1.0474);transform-origin:0 0;"><b>FECHA:</b></div><div class="a" style="left:764.8px;top:472.69px;font-size:11px;line-height:11px;color:#000;font-family:'Liberation Serif',serif;letter-spacing:0.458px;transform:scaleX(1.1265);transform-origin:0 0;">29 DE SEPTIEMBRE DE 2022</div><div class="a" style="left:715.9px;top:486.49px;font-size:11px;line-height:11px;color:#000;font-family:'Liberation Serif',serif;letter-spacing:0.311px;transform:scaleX(1.0596);transform-origin:0 0;"><b>CONTACTO:</b></div><div class="a" style="left:793.2px;top:486.49px;font-size:11px;line-height:11px;color:#000;font-family:'Liberation Serif',serif;letter-spacing:0.533px;transform:scaleX(1.1505);transform-origin:0 0;"><b><i>0997454487</i></b></div><div class="a" style="left:715.9px;top:500.79px;font-size:11px;line-height:11px;color:#000;font-family:'Liberation Serif',serif;letter-spacing:0.277px;transform:scaleX(1.0628);transform-origin:0 0;">VIGENCIA:</div><div class="a" style="left:781.5px;top:500.79px;font-size:11px;line-height:11px;color:#000;font-family:'Liberation Serif',serif;letter-spacing:0.581px;transform:scaleX(1.1616);transform-origin:0 0;"><i>30 DÍAS</i></div><div class="a" style="left:362px;top:537.94px;font-size:13.33px;line-height:13.33px;color:#000;font-family:'Liberation Serif',serif;"><b>I</b></div><div class="a" style="left:362px;top:552.94px;font-size:13.33px;line-height:13.33px;color:#000;font-family:'Liberation Serif',serif;"><b>T</b></div><div class="a" style="left:362px;top:568.74px;font-size:13.33px;line-height:13.33px;color:#000;font-family:'Liberation Serif',serif;"><b>E</b></div><div class="a" style="left:362px;top:583.74px;font-size:13.33px;line-height:13.33px;color:#000;font-family:'Liberation Serif',serif;"><b>M</b></div><div class="a" style="left:403.7px;top:561.04px;font-size:13.33px;line-height:13.33px;color:#000;font-family:'Liberation Serif',serif;letter-spacing:-0.464px;transform:scaleX(0.9517);transform-origin:0 0;"><b>CPC</b></div><div class="a" style="left:497px;top:561.04px;font-size:13.33px;line-height:13.33px;color:#000;font-family:'Liberation Serif',serif;letter-spacing:0.078px;transform:scaleX(1.0128);transform-origin:0 0;"><b>DESCRIPCIÓN</b></div><div class="a" style="left:653.5px;top:545.34px;font-size:13.33px;line-height:13.33px;color:#000;font-family:'Liberation Serif',serif;letter-spacing:-0.303px;transform:scaleX(0.9592);transform-origin:0 0;"><b>UNIDAD</b></div><div class="a" style="left:666.3px;top:560.74px;font-size:13.33px;line-height:13.33px;color:#000;font-family:'Liberation Serif',serif;letter-spacing:1.380px;transform:scaleX(1.1259);transform-origin:0 0;"><b>DE</b></div><div class="a" style="left:653px;top:576.14px;font-size:13.33px;line-height:13.33px;color:#000;font-family:'Liberation Serif',serif;letter-spacing:-0.454px;transform:scaleX(0.9422);transform-origin:0 0;"><b>MEDIDA</b></div><div class="a" style="left:726.5px;top:561.04px;font-size:13.33px;line-height:13.33px;color:#000;font-family:'Liberation Serif',serif;letter-spacing:-0.331px;transform:scaleX(0.9538);transform-origin:0 0;"><b>CANTIDAD</b></div><div class="a" style="left:821px;top:561.04px;font-size:13.33px;line-height:13.33px;color:#000;font-family:'Liberation Serif',serif;letter-spacing:0.173px;transform:scaleX(1.0307);transform-origin:0 0;"><b>V.UNITARIO</b></div><div class="a" style="left:951.5px;top:561.04px;font-size:13.33px;line-height:13.33px;color:#000;font-family:'Liberation Serif',serif;letter-spacing:0.035px;transform:scaleX(1.0056);transform-origin:0 0;"><b>V.TOTAL</b></div><div class="a" style="left:353.4px;top:601.06px;font-size:10.8px;line-height:10.8px;color:#000;font-family:'Liberation Serif',serif;letter-spacing:-0.403px;transform:scaleX(0.8994);transform-origin:0 0;">1</div><div class="a" style="left:381.4px;top:601.06px;font-size:10.8px;line-height:10.8px;color:#000;font-family:'Liberation Serif',serif;letter-spacing:0.624px;transform:scaleX(1.1858);transform-origin:0 0;">381120119</div><div class="a" style="left:451px;top:601.06px;font-size:10.8px;line-height:10.8px;color:#000;font-family:'Liberation Serif',serif;letter-spacing:0.012px;transform:scaleX(1.0029);transform-origin:0 0;">SILLA&nbsp; PLÁSTICA</div><div class="a" style="left:715.4px;top:601.06px;font-size:10.8px;line-height:10.8px;color:#000;font-family:'Liberation Serif',serif;letter-spacing:0.817px;transform:scaleX(1.1280);transform-origin:0 0;">90</div><div class="a" style="left:809.5px;top:601.06px;font-size:10.8px;line-height:10.8px;color:#000;font-family:'Liberation Serif',serif;letter-spacing:0.508px;transform:scaleX(1.1644);transform-origin:0 0;">$ 8,50</div><div class="a" style="left:912.9px;top:601.06px;font-size:10.8px;line-height:10.8px;color:#000;font-family:'Liberation Serif',serif;letter-spacing:0.514px;transform:scaleX(1.1667);transform-origin:0 0;">$ 765,00</div><div class="a" style="left:353.4px;top:628.06px;font-size:10.8px;line-height:10.8px;color:#000;font-family:'Liberation Serif',serif;letter-spacing:0.223px;transform:scaleX(1.0659);transform-origin:0 0;">2</div><div class="a" style="left:381.4px;top:628.06px;font-size:10.8px;line-height:10.8px;color:#000;font-family:'Liberation Serif',serif;letter-spacing:0.624px;transform:scaleX(1.1858);transform-origin:0 0;">381120119</div><div class="a" style="left:451px;top:628.06px;font-size:10.8px;line-height:10.8px;color:#000;font-family:'Liberation Serif',serif;letter-spacing:0.192px;transform:scaleX(1.0489);transform-origin:0 0;">MESA PLÁSTICA&nbsp; DE 6 PUESTOS</div><div class="a" style="left:715.4px;top:628.06px;font-size:10.8px;line-height:10.8px;color:#000;font-family:'Liberation Serif',serif;letter-spacing:0.422px;transform:scaleX(1.1325);transform-origin:0 0;">4</div><div class="a" style="left:809.5px;top:628.06px;font-size:10.8px;line-height:10.8px;color:#000;font-family:'Liberation Serif',serif;letter-spacing:0.515px;transform:scaleX(1.1669);transform-origin:0 0;">$ 43.15</div><div class="a" style="left:912.9px;top:628.06px;font-size:10.8px;line-height:10.8px;color:#000;font-family:'Liberation Serif',serif;letter-spacing:0.514px;transform:scaleX(1.1667);transform-origin:0 0;">$ 172,60</div><div class="a" style="left:1343px;top:181px;width:16px;height:525px;background:#dadada"></div><div class="a" style="left:1343px;top:183px;width:16px;height:15px;background:#fff;border:1px solid #7a7a7a"></div><svg class="a" style="left:1347px;top:187px" width="8" height="5"><path d="M0 4.5L4 0.5 8 4.5z" fill="#666"/></svg><div class="a" style="left:1343px;top:219px;width:16px;height:56px;background:#fff;border:1px solid #7a7a7a"></div><div class="a" style="left:1343px;top:690px;width:16px;height:15px;background:#fff;border:1px solid #7a7a7a"></div><svg class="a" style="left:1347px;top:695px" width="8" height="5"><path d="M0 0.5L4 4.5 8 0.5z" fill="#666"/></svg><div class="a" style="left:0;top:706px;width:1360px;height:1px;background:#d6d6d6"></div><div class="a" style="left:0;top:707px;width:1360px;height:21px;background:#f3f3f3"></div><div class="a" style="left:8.4px;top:710.84px;font-size:12px;line-height:12px;color:#3b3b3b;font-family:'Liberation Sans',sans-serif;transform:scaleX(0.9289);transform-origin:0 0;">Página 1 de 4</div><div class="a" style="left:96.6px;top:710.84px;font-size:12px;line-height:12px;color:#3b3b3b;font-family:'Liberation Sans',sans-serif;transform:scaleX(0.9203);transform-origin:0 0;">1430 palabras</div><svg class="a" style="left:186px;top:710px" width="15" height="13" viewBox="0 0 15 13"><path d="M0.5 1.5h4.5l2 1.5v9.5l-2-1.5H0.5z M7 3l2-1.5" fill="none" stroke="#777" stroke-width="1"/><path d="M6.5 12V4" stroke="#777" stroke-width="1"/><path d="M9.5 4l4 4M13.5 4l-4 4" stroke="#555" stroke-width="1.1"/></svg><div class="a" style="left:218.4px;top:710.84px;font-size:12px;line-height:12px;color:#3b3b3b;font-family:'Liberation Sans',sans-serif;transform:scaleX(0.9026);transform-origin:0 0;">Español (España)</div><svg class="a" style="left:357px;top:710px" width="17" height="16" viewBox="0 0 17 16"><path d="M7 1.5v4M4 3.5a6 6 0 1 0 7.5 0" fill="none" stroke="#555" stroke-width="1.2"/><path d="M7.5 8l8 7M15.5 8l-8 7" stroke="#444" stroke-width="1.5"/></svg><div class="a" style="left:377px;top:710.84px;font-size:12px;line-height:12px;color:#3b3b3b;font-family:'Liberation Sans',sans-serif;transform:scaleX(0.9492);transform-origin:0 0;">Accesibilidad: es necesario investigar</div><svg class="a" style="left:1073px;top:710px" width="14" height="13" viewBox="0 0 14 13"><path d="M0.5 1.5h5l1.5 1 1.5-1h5v10h-5l-1.5 1-1.5-1h-5z M7 2.5v9" fill="none" stroke="#666" stroke-width="1"/><path d="M2 4h3.5M2 6h3.5M2 8h3.5M8.5 4H12M8.5 6H12M8.5 8H12" stroke="#666" stroke-width="1"/></svg><div class="a" style="left:1100px;top:707px;width:40px;height:21px;background:#c8c8c8"></div><svg class="a" style="left:1113px;top:710px" width="15" height="14" viewBox="0 0 15 14"><rect x="0.5" y="0.5" width="14" height="13" fill="none" stroke="#666" stroke-width="1"/><path d="M3 3.5h9M3 6h9M3 8.5h9M3 11h9" stroke="#666" stroke-width="1"/></svg><svg class="a" style="left:1153px;top:710px" width="15" height="14" viewBox="0 0 15 14"><path d="M9 0.5H0.5v12h6" fill="none" stroke="#666" stroke-width="1"/><path d="M2.5 3h6M2.5 5.5h6M2.5 8h4" stroke="#666" stroke-width="1"/><circle cx="10.5" cy="9.5" r="4" fill="#666"/><path d="M7 9.5h7M10.5 5.5v8" stroke="#f3f3f3" stroke-width="0.7"/></svg><div class="a" style="left:1186px;top:716px;width:8px;height:1px;background:#555"></div><div class="a" style="left:1199px;top:717px;width:100px;height:1px;background:#555"></div><div class="a" style="left:1247px;top:712px;width:5px;height:11px;background:#444"></div><svg class="a" style="left:1303px;top:712px" width="10" height="10"><path d="M0 4.5h9M4.5 0v9" stroke="#555" stroke-width="1"/></svg><div class="a" style="left:1325.4px;top:710.84px;font-size:12px;line-height:12px;color:#3b3b3b;font-family:'Liberation Sans',sans-serif;transform:scaleX(0.8598);transform-origin:0 0;">100%</div><div class="a" style="left:0;top:728px;width:1360px;height:40px;background:#111"></div><div class="a" style="left:197px;top:728px;width:44px;height:40px;background:#2e2e2e"></div><div class="a" style="left:241px;top:728px;width:4px;height:40px;background:#1c1c1c"></div><div class="a" style="left:197px;top:766px;width:44px;height:2px;background:#76b9ed"></div><div class="a" style="left:250px;top:766px;width:40px;height:2px;background:#76b9ed"></div><div class="a" style="left:397px;top:766px;width:40px;height:2px;background:#76b9ed"></div><div class="a" style="left:446px;top:766px;width:40px;height:2px;background:#76b9ed"></div><div class="a" style="left:495px;top:766px;width:40px;height:2px;background:#76b9ed"></div><svg class="a" style="left:15px;top:739px" width="18" height="18" viewBox="0 0 18 18"><path d="M0 2.5L7.5 1.4V8.5H0z M8.5 1.3L17.5 0V8.5H8.5z M0 9.5H7.5V16.6L0 15.5z M8.5 9.5H17.5V18L8.5 16.7z" fill="#fff"/></svg><svg class="a" style="left:63px;top:739px" width="18" height="18" viewBox="0 0 18 18"><circle cx="11" cy="7" r="5.5" fill="none" stroke="#fff" stroke-width="1.4"/><path d="M7 11L1 17" stroke="#fff" stroke-width="1.6"/></svg><svg class="a" style="left:110px;top:735px" width="25" height="24" viewBox="0 0 25 24"><defs><linearGradient id="eg" x1="0" y1="0" x2="1" y2="1"><stop offset="0" stop-color="#3bd18a"/><stop offset="0.5" stop-color="#1fa2e0"/><stop offset="1" stop-color="#1462b8"/></linearGradient></defs><path d="M12.5 0.5C19 0.5 24.5 5 24.5 11c0 4-3 6-6.5 6-3 0-5-1.5-5-3.5 0-1 .7-1.5.7-2.5 0-2.5-3-4-6-4-3 0-6 2.5-7.2 4.5C1 5.5 6 .5 12.5.5z" fill="url(#eg)"/><path d="M0.5 11.5c0 7 5.5 12 12 12 3.5 0 6.5-1.5 8.5-4-1.5.5-3 .8-4.5.8-5 0-8.5-3.5-8.5-7 0-2.5 1.5-4 3-5-5-.5-10.5 2-10.5 3.2z" fill="#1a5fb4"/><path d="M8 11c-1 3.5 2 8 8 8 2 0 4-.5 5-1.5-2 .5-4 0-5.5-.5" fill="#2ea5e8"/></svg><svg class="a" style="left:160px;top:736px" width="23" height="23" viewBox="0 0 24 24"><circle cx="12" cy="12" r="11.5" fill="#db4437"/><path d="M12 12 L1.5 7 A11.5 11.5 0 0 0 12 23.5 Z" fill="#0f9d58"/><path d="M12 12 L12 23.5 A11.5 11.5 0 0 0 22.5 7 Z" fill="#f4b400"/><path d="M12 12 L1.5 7 A11.5 11.5 0 0 1 22.5 7 Z" fill="#db4437"/><circle cx="12" cy="12" r="5.3" fill="#fff"/><circle cx="12" cy="12" r="4.2" fill="#4285f4"/></svg><svg class="a" style="left:208px;top:737px" width="26" height="22" viewBox="0 0 26 22"><rect x="6" y="0" width="19" height="22" rx="1.5" fill="#41a5ee"/><rect x="6" y="5.5" width="19" height="5.5" fill="#2b7cd3"/><rect x="6" y="11" width="19" height="5.5" fill="#185abd"/><rect x="6" y="16.5" width="19" height="5.5" rx="1" fill="#103f91"/><rect x="0" y="4" width="13" height="13" rx="1.5" fill="#185abd"/><path d="M2 7l1.8 7 1.9-5.5 1.9 5.5 1.8-7" fill="none" stroke="#fff" stroke-width="1.4"/></svg><svg class="a" style="left:258px;top:738px" width="23" height="20" viewBox="0 0 23 20"><path d="M0 1.5h8l2 2h13v16H0z" fill="#e8a825"/><rect x="0" y="5" width="23" height="15" fill="#fcd462"/><rect x="7" y="12" width="9" height="8" fill="#1e7fd2"/><rect x="9" y="14" width="5" height="6" fill="#fcd462"/></svg><svg class="a" style="left:307px;top:737px" width="25" height="22" viewBox="0 0 25 22"><rect x="6" y="0" width="19" height="22" rx="1.5" fill="#21a366"/><rect x="15" y="0" width="10" height="11" fill="#33c481"/><rect x="6" y="11" width="19" height="11" fill="#107c41"/><rect x="0" y="4" width="13" height="13" rx="1.5" fill="#185c37"/><path d="M3 7l6 7M9 7l-6 7" stroke="#fff" stroke-width="1.6"/></svg><svg class="a" style="left:356px;top:735px" width="24" height="24" viewBox="0 0 24 24"><defs><radialGradient id="ff" cx="0.7" cy="0.1" r="1"><stop offset="0" stop-color="#ffde3a"/><stop offset="0.4" stop-color="#ff7a1a"/><stop offset="0.8" stop-color="#e31587"/></radialGradient></defs><path d="M12 23.5A11 11 0 0 1 1 12.5C1 8 3 5 4.5 4c0 1.5.5 2.5 1 3 1-3 3.5-5 6-5.5-.5 1 0 2.5 1.5 3.5 3 1 6 2 7 5.5.5-1.5 0-4-.5-5.5 2.5 2.5 3.5 5 3.5 7.5A11 11 0 0 1 12 23.5z" fill="url(#ff)"/><circle cx="12" cy="14" r="5.5" fill="#7542e5"/><path d="M7 11c2-1.5 5-1.5 7 0-2 0-3 1-3 2.5" fill="#ff9a3a"/></svg><svg class="a" style="left:405px;top:736px" width="23" height="23" viewBox="0 0 24 24"><circle cx="12" cy="12" r="11.5" fill="#db4437"/><path d="M12 12 L1.5 7 A11.5 11.5 0 0 0 12 23.5 Z" fill="#0f9d58"/><path d="M12 12 L12 23.5 A11.5 11.5 0 0 0 22.5 7 Z" fill="#f4b400"/><path d="M12 12 L1.5 7 A11.5 11.5 0 0 1 22.5 7 Z" fill="#db4437"/><circle cx="12" cy="12" r="5.3" fill="#fff"/><circle cx="12" cy="12" r="4.2" fill="#4285f4"/></svg><svg class="a" style="left:415px;top:745px" width="16" height="16" viewBox="0 0 16 16"><circle cx="8" cy="8" r="7.5" fill="#777"/><circle cx="8" cy="8" r="5.5" fill="#bbb"/><path d="M4 6h8M4 9h8M6 12h4" stroke="#444" stroke-width="1.3"/></svg><svg class="a" style="left:453px;top:735px" width="25" height="25" viewBox="0 0 25 25"><path d="M10 4C4.5 4 1 8 1 12.5 1 17 4 19.5 7.5 19.5c2 0 2.5-1.5 4-1.5s2.5 2 5 2c3 0 5.5-3 5.5-7C22 7.5 16.5 4 10 4z" fill="#d8e4f0"/><circle cx="6" cy="10.5" r="1.8" fill="#e04040"/><circle cx="10" cy="8" r="1.8" fill="#f0c020"/><circle cx="14.5" cy="8.5" r="1.8" fill="#40b040"/><circle cx="5.5" cy="15" r="1.8" fill="#3070e0"/><path d="M23.5 1L13 19l-1.5 5.5L16 20 24.5 2z" fill="#d08a30"/><path d="M22 1.5l2.5 1.5 .5-2.5z" fill="#888"/></svg><svg class="a" style="left:505px;top:736px" width="20" height="24" viewBox="0 0 20 24"><rect x="0.5" y="0.5" width="19" height="23" fill="#fff"/><rect x="3" y="3" width="14" height="4" fill="#111"/><g fill="#111"><rect x="3" y="10" width="3" height="2.5"/><rect x="8.5" y="10" width="3" height="2.5"/><rect x="14" y="10" width="3" height="2.5"/><rect x="3" y="14.5" width="3" height="2.5"/><rect x="8.5" y="14.5" width="3" height="2.5"/><rect x="14" y="14.5" width="3" height="2.5"/><rect x="3" y="19" width="3" height="2.5"/><rect x="8.5" y="19" width="3" height="2.5"/><rect x="14" y="19" width="3" height="2.5"/></g></svg><svg class="a" style="left:1116px;top:743px" width="14" height="9"><path d="M1 8L7 1.5 13 8" fill="none" stroke="#fff" stroke-width="1.2"/></svg><svg class="a" style="left:1141px;top:738px" width="13" height="19" viewBox="0 0 13 19"><path d="M3 3.5A5 5 0 0 0 3 15.5M10 3.5a5 5 0 0 1 0 12" fill="none" stroke="#ddd" stroke-width="1"/><rect x="2.5" y="6.5" width="6" height="6" fill="none" stroke="#ddd" stroke-width="1.1"/><path d="M8.5 8.5l3-1.5v5l-3-1.5" fill="none" stroke="#ddd" stroke-width="1.1"/></svg><svg class="a" style="left:1162px;top:739px" width="17" height="17" viewBox="0 0 17 17"><rect x="4.5" y="3.5" width="12" height="9" fill="none" stroke="#ddd" stroke-width="1.1"/><path d="M10.5 12.5v3M7 15.5h7" stroke="#ddd" stroke-width="1.1"/><rect x="0.5" y="0.5" width="5" height="7" fill="#111" stroke="#ddd" stroke-width="1"/><path d="M3 7.5v4h1.5" fill="none" stroke="#ddd" stroke-width="1"/></svg><svg class="a" style="left:1186px;top:739px" width="18" height="17" viewBox="0 0 18 17"><path d="M0.5 6h3l4-4v13l-4-4h-3z" fill="none" stroke="#ddd" stroke-width="1.1"/><path d="M10 6a3 3 0 0 1 0 5M12.5 4a6 6 0 0 1 0 9M15 2a9 9 0 0 1 0 13" fill="none" stroke="#bbb" stroke-width="1"/></svg><div class="a" style="left:1215.3px;top:742.04px;font-size:12px;line-height:12px;color:#fff;font-family:'Liberation Sans',sans-serif;transform:scaleX(0.7578);transform-origin:0 0;">ESP</div><div class="a" style="left:1261.6px;top:732.24px;font-size:12px;line-height:12px;color:#fff;font-family:'Liberation Sans',sans-serif;transform:scaleX(0.9128);transform-origin:0 0;">11:49</div><div class="a" style="left:1249px;top:750.54px;font-size:12px;line-height:12px;color:#fff;font-family:'Liberation Sans',sans-serif;transform:scaleX(0.9683);transform-origin:0 0;">29/9/2022</div><svg class="a" style="left:1318px;top:739px" width="18" height="18" viewBox="0 0 18 18"><path d="M0.5 0.5h16v12h-8l-3.5 4v-4H0.5z" fill="none" stroke="#fff" stroke-width="1.1"/></svg><div class="a" style="left:1355px;top:728px;width:1px;height:40px;background:#444"></div>
</div></body></html>
